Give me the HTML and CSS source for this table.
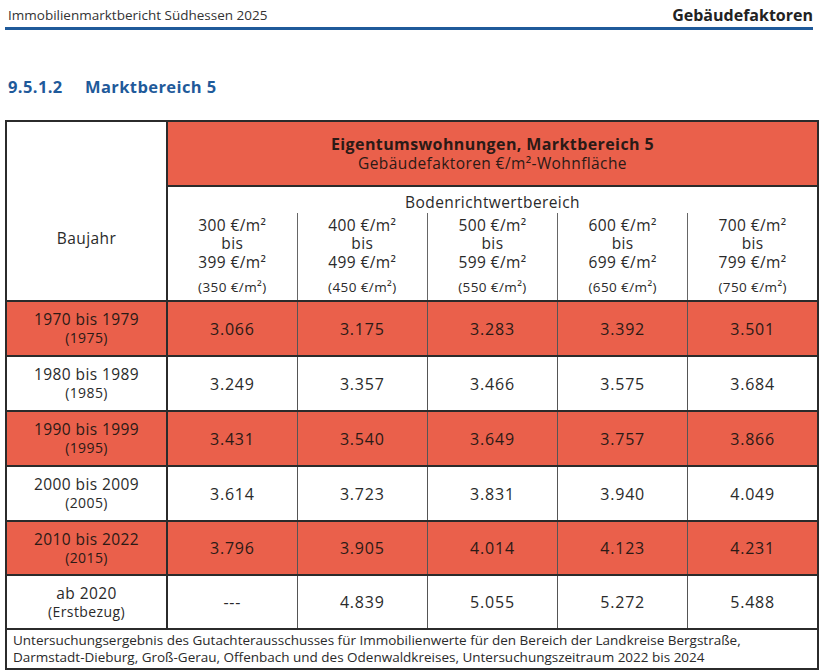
FILE: index.html
```html
<!DOCTYPE html>
<html lang="de">
<head>
    <meta charset="UTF-8">
    <meta name="viewport" content="width=device-width, initial-scale=1.0">
    <title>Gebäudefaktoren - Marktbereich 5</title>
    <link rel="stylesheet" href="styles.css">
</head>
<body>

<div class="page">
    <div class="running-head">
        <span class="report">Immobilienmarktbericht Südhessen 2025</span>
        <span class="chapter">Gebäudefaktoren</span>
    </div>

    <h2 class="section-title"><span class="num">9.5.1.2</span>Marktbereich 5</h2>

    <table class="factors">
        <colgroup>
            <col class="col-year">
            <col><col><col><col><col>
        </colgroup>
        <tr class="title-row">
            <td class="baujahr" rowspan="3">Baujahr</td>
            <td class="title red" colspan="5">
                <strong>Eigentumswohnungen, Marktbereich 5</strong>
                <span class="subtitle">Gebäudefaktoren €/m²-Wohnfläche</span>
            </td>
        </tr>
        <tr class="label-row">
            <td class="range-label" colspan="5">Bodenrichtwertbereich</td>
        </tr>
        <tr class="range-row">
            <td class="range">300 €/m²<br>bis<br>399 €/m²<span class="mid">(350 €/m²)</span></td>
            <td class="range">400 €/m²<br>bis<br>499 €/m²<span class="mid">(450 €/m²)</span></td>
            <td class="range">500 €/m²<br>bis<br>599 €/m²<span class="mid">(550 €/m²)</span></td>
            <td class="range">600 €/m²<br>bis<br>699 €/m²<span class="mid">(650 €/m²)</span></td>
            <td class="range">700 €/m²<br>bis<br>799 €/m²<span class="mid">(750 €/m²)</span></td>
        </tr>
        <tr class="data red">
            <td class="year">1970 bis 1979<span class="sub">(1975)</span></td>
            <td>3.066</td><td>3.175</td><td>3.283</td><td>3.392</td><td>3.501</td>
        </tr>
        <tr class="data">
            <td class="year">1980 bis 1989<span class="sub">(1985)</span></td>
            <td>3.249</td><td>3.357</td><td>3.466</td><td>3.575</td><td>3.684</td>
        </tr>
        <tr class="data red">
            <td class="year">1990 bis 1999<span class="sub">(1995)</span></td>
            <td>3.431</td><td>3.540</td><td>3.649</td><td>3.757</td><td>3.866</td>
        </tr>
        <tr class="data">
            <td class="year">2000 bis 2009<span class="sub">(2005)</span></td>
            <td>3.614</td><td>3.723</td><td>3.831</td><td>3.940</td><td>4.049</td>
        </tr>
        <tr class="data red short">
            <td class="year">2010 bis 2022<span class="sub">(2015)</span></td>
            <td>3.796</td><td>3.905</td><td>4.014</td><td>4.123</td><td>4.231</td>
        </tr>
        <tr class="data short">
            <td class="year">ab 2020<span class="sub">(Erstbezug)</span></td>
            <td>---</td><td>4.839</td><td>5.055</td><td>5.272</td><td>5.488</td>
        </tr>
        <tr class="note-row">
            <td class="note" colspan="6">Untersuchungsergebnis des Gutachterausschusses für Immobilienwerte für den Bereich der Landkreise Bergstraße, Darmstadt-Dieburg, Groß-Gerau, Offenbach und des Odenwaldkreises, Untersuchungszeitraum 2022 bis 2024</td>
        </tr>
    </table>
</div>

</body>
</html>
```

FILE: styles.css
```css
body {
    margin: 0;
    background-color: #ffffff;
    font-family: 'Open Sans', 'DejaVu Sans', sans-serif;
    color: #2a2a2a;
}
.page {
    width: 827px;
}
.running-head {
    display: flex;
    justify-content: space-between;
    align-items: flex-end;
    height: 27px;
    margin: 0 14px 0 5px;
    padding-left: 3px;
    border-bottom: 3px solid #1f5a9a;
    box-sizing: content-box;
}
.running-head .report {
    font-size: 13.5px;
    line-height: 20px;
    color: #333;
    padding-bottom: 2px;
}
.running-head .chapter {
    font-size: 16px;
    font-weight: bold;
    line-height: 20px;
    color: #222;
    padding-bottom: 2px;
}
.section-title {
    margin: 46px 0 0 8px;
    font-size: 16.5px;
    line-height: 22px;
    font-weight: bold;
    color: #1f5a9a;
    letter-spacing: 0.4px;
}
.section-title .num {
    display: inline-block;
    width: 77px;
}
.factors {
    margin: 22px 0 0 5px;
    width: 814px;
    border-collapse: collapse;
    table-layout: fixed;
    border: 2px solid #2b2b2b;
    text-align: center;
    font-size: 15.5px;
    color: #2a2a2a;
    letter-spacing: 0.4px;
}
.factors .col-year {
    width: 161px;
}
.factors td {
    padding: 0;
    vertical-align: middle;
}
.red,
.red td {
    background-color: #ea604b;
    color: #2b1a16;
}
.title-row {
    height: 65px;
}
.title {
    border-bottom: 2px solid #2b2b2b;
}
.title strong {
    display: block;
    font-size: 16px;
    line-height: 19px;
}
.title .subtitle {
    display: block;
    line-height: 19px;
}
.baujahr {
    border-right: 2px solid #2b2b2b;
    padding-top: 54px !important;
}
.label-row {
    height: 27px;
}
.range-label {
    padding-top: 4px !important;
}
.range-row {
    height: 88px;
}
.range {
    line-height: 18.5px;
    border-left: 1px solid #666;
}
.range:first-child {
    border-left: none;
}
.range .mid {
    display: block;
    margin-top: 7px;
    font-size: 13.5px;
    line-height: 19px;
}
.data {
    height: 55px;
}
.data.short {
    height: 54px;
}
.data td {
    border-top: 2px solid #2b2b2b;
    border-left: 1px solid #555;
    font-size: 16px;
    letter-spacing: 0.8px;
}
.data td.year {
    border-left: none;
    border-right: 2px solid #2b2b2b;
    font-size: 15.5px;
    line-height: 19px;
    letter-spacing: 0.4px;
}
.year .sub {
    display: block;
    font-size: 14px;
    line-height: 18px;
}
.note-row {
    height: 40px;
}
.note {
    border-top: 2px solid #2b2b2b;
    text-align: left;
    padding: 2px 6px !important;
    font-size: 13.5px;
    line-height: 17px;
    letter-spacing: 0;
}
```
